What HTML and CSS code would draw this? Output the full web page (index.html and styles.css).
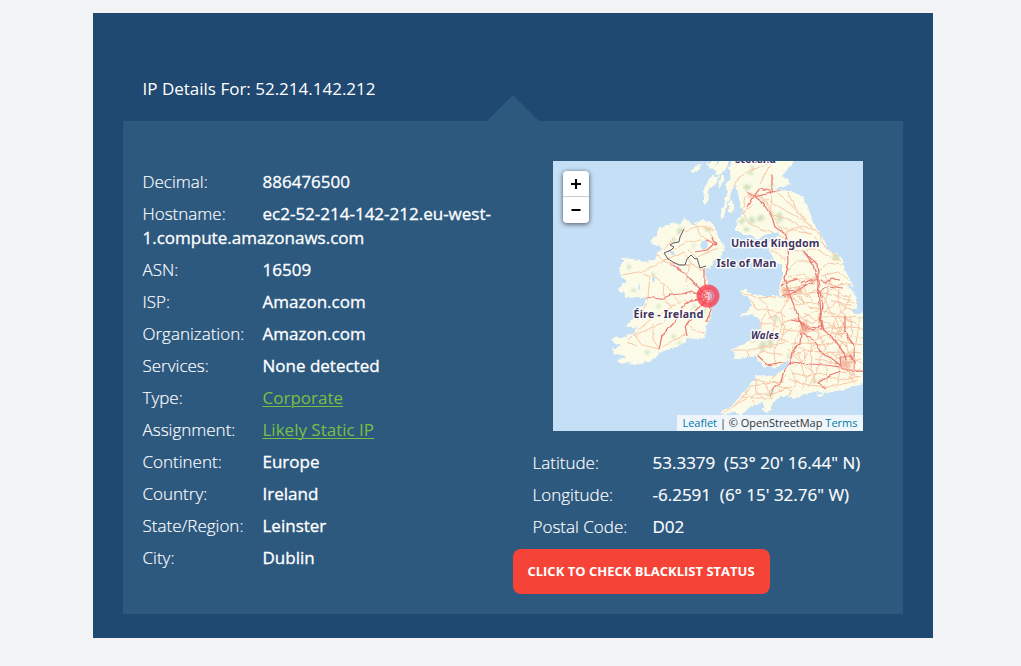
FILE: index.html
```
<!DOCTYPE html>
<html lang="en">
<head>
<meta charset="utf-8">
<title>IP Details</title>
<link rel="stylesheet" href="styles.css">
</head>
<body>
<main class="card">
  <h1 class="title">IP Details For: 52.214.142.212</h1>
  <section class="panel">
    <div class="details">
      <p class="row"><span class="label">Decimal:</span><span class="value">886476500</span></p>
      <p class="row"><span class="label">Hostname:</span><span class="value">ec2-52-214-142-212.eu-west-<br>1.compute.amazonaws.com</span></p>
      <p class="row"><span class="label">ASN:</span><span class="value">16509</span></p>
      <p class="row"><span class="label">ISP:</span><span class="value">Amazon.com</span></p>
      <p class="row"><span class="label">Organization:</span><span class="value">Amazon.com</span></p>
      <p class="row"><span class="label">Services:</span><span class="value">None detected</span></p>
      <p class="row"><span class="label">Type:</span><a class="link">Corporate</a></p>
      <p class="row"><span class="label">Assignment:</span><a class="link">Likely Static IP</a></p>
      <p class="row"><span class="label">Continent:</span><span class="value">Europe</span></p>
      <p class="row"><span class="label">Country:</span><span class="value">Ireland</span></p>
      <p class="row"><span class="label">State/Region:</span><span class="value">Leinster</span></p>
      <p class="row"><span class="label">City:</span><span class="value">Dublin</span></p>
    </div>
    <div class="location">
      <div class="map">
        <svg class="map-art" viewBox="553 161 310 270" width="310" height="270">
          <defs>
            <filter id="coast" x="-5%" y="-5%" width="110%" height="110%">
              <feTurbulence type="fractalNoise" baseFrequency="0.22" numOctaves="2" seed="4" result="n"/>
              <feDisplacementMap in="SourceGraphic" in2="n" scale="5" xChannelSelector="R" yChannelSelector="G"/>
            </filter>
            <filter id="wobble" x="-5%" y="-5%" width="110%" height="110%">
              <feTurbulence type="fractalNoise" baseFrequency="0.12" numOctaves="2" seed="9" result="n"/>
              <feDisplacementMap in="SourceGraphic" in2="n" scale="4" xChannelSelector="R" yChannelSelector="G"/>
              <feGaussianBlur stdDeviation="0.25"/>
            </filter>
            <filter id="soft"><feGaussianBlur stdDeviation="1"/></filter>
            <path id="gb" d="M733 160L728 168 731 176 726 184 727 194 724 204 720 213 721 219 724 217 726 207 729 199 732 191 736 184 738 193 740 203 743 212 736 222 736 230 741 234 751 235 758 239 765 235 775 232 781 235 773 238 768 245 770 253 776 262 783 267 783 275 780 283 780 293 782 298 775 296 760 296 751 293 743 290 742 295 750 299 751 305 746 312 740 317 753 314 760 320 759 329 755 338 743 344 731 349 736 356 733 360 745 358 755 355 759 361 763 366 775 368 786 362 791 360 786 368 778 373 773 376 756 375 755 379 748 388 740 396 735 404 721 413 725 415 735 411 741 416 745 411 755 404 763 403 763 409 768 413 773 403 780 396 788 396 795 398 808 393 818 391 825 393 838 391 855 386 868 383V310L860 313 855 315 852 310 857 307 857 300 852 290 846 285 853 286 850 280 847 273 842 265 843 258 838 255 828 250 823 240 819 230 813 223 808 207 803 197 793 192 781 190 775 192 780 187 790 185 788 180 783 177 785 172 793 163 794 158Z"/>
            <path id="eire" d="M684 217L689 221 694 227 695 222 705 221 714 223 716 232 720 240 724 247 722 255 716 259 713 263 708 269 705 272 706 278 708 285 710 297 712 308 711 318 706 327 704 334 705 338 695 339 688 338 685 342 677 347 668 350 660 353 655 358 647 362 637 365 628 364 633 360 622 364 618 361 625 356 613 353 612 348 622 345 612 342 613 338 622 337 633 334 638 328 626 326 633 318 638 310 646 302 646 298 635 297 625 297 624 293 618 290 621 285 627 282 621 277 619 272 622 265 622 258 633 259 645 262 655 260 657 253 663 249 660 245 652 245 650 241 658 233 657 230 667 225 673 222 680 225Z"/>
            <clipPath id="land"><use href="#gb"/><use href="#eire"/></clipPath>
          </defs>
          <rect class="sea" x="553" y="161" width="310" height="270"/>
          <g class="ground" filter="url(#coast)">
            <use href="#gb"/><use href="#eire"/>
            <path d="M728 203l4-2 3 6-2 6-5-1zM691 171l5-5 7-3-4 6-6 4zM708 180l6-5 5 2-3 8-7 3-3 8-3-2 2-9zM704 196l5-2-1 9-4 2zM713 168l9-8 8 0-4 9-8 7zM743 265l4-6 5-3-1 5-4 5zM741 290l6-1 1 6-6 0zM815 394l6-1 5 2-6 2zM707 165l5-5 6 1-5 8zM721 176l4-1-4 12-3 2z"/>
          </g>
          <g clip-path="url(#land)">
            <g class="wood" filter="url(#soft)">
              <path d="M745 184l7 2-4 5-5-3zM738 222l5-5 3 3-4 5zM748 219l4-3 4 5-5 4zM743 229l4-2 3 3-4 2zM776 214l5-2 2 8-5 3zM770 210l4 3-3 5zM756 218l6-4 3 5-6 3zM760 199l6 3-4 3zM746 174l5-3 3 4zM833 253l7 3-2 5-6-2zM768 330l6 6-2 14-6-10zM762 340l5 4-4 7-5-3zM774 314l4 5-4 5zM750 165l5 2-3 5zM768 186l5-2 2 4zM803 250l4 3-4 3zM843 357l5 2-4 3zM812 378l5 2-4 4zM770 390l5 2-4 5-4-2zM787 353l4 2-3 5zM677 229l5-2 1 4-5 3zM672 238l5 1-4 4zM705 227l6 0-2 5-5-2zM692 244l4 1-3 3zM627 264l5 3-4 3zM651 272l5 2-3 3zM630 291l4-3 3 4zM672 334l5 3-5 2zM645 350l6 2-5 3zM693 304l4 2-4 4zM676 344l4-3 2 3zM703 307l4 2-3 6zM657 304l4 1-3 5z"/>
            </g>
            <path class="lake" d="M702 241l5-1 1 7-5 3-3-4zM669 250l5 2 1 4-4-2zM653 275l2 3-1 5-2-3zM639 282l1 7-2 1zM665 313l1 6-2 3z"/>
            <g class="minor" filter="url(#wobble)">
              <!-- Ireland -->
              <path d="M622 275L643 271 660 262 684 252M643 273L650 277 648 296 646 304 638 321M649 272L664 284 680 302M685 232L701 226 714 230M668 252L687 242 701 240M696 223L700 236 715 243M684 252L692 265 704 270M634 334L650 320 671 307 686 300M633 335L642 345 659 349 686 333M653 323V340L659 348M633 336L650 328 664 322M633 335L628 342 637 346M692 309L686 324 705 335M670 307L663 295 664 284M690 264L686 282 691 297M650 260L659 255 665 262 690 266M688 250L697 257 707 252 719 248M706 225L714 239M663 251L672 240 684 227"/>
              <!-- Scotland and the north -->
              <path d="M734 191L738 178 751 170 762 166 773 161M772 161L760 184M757 195L773 203 790 213 813 227M761 194L773 215 789 219 810 235M779 193L789 203 799 214 814 229M746 196L743 213 751 225 765 230 783 238M742 213L753 205M772 195L769 209 780 228 794 231 812 234M788 192L794 206 806 220M784 233L802 226 816 230M786 238L780 250 772 248M786 250L800 251 816 249M816 229L824 246 837 256M814 237L830 250M817 249L830 258 841 261M786 260L770 249M788 270L797 261 817 261M818 271L828 263 841 265M821 276L838 272 847 279M818 280L835 285 852 284M788 277L804 274 813 282"/>
              <!-- England -->
              <path d="M782 282L799 279 815 279M783 290L797 287 815 283M779 284L790 297 800 303M784 298L797 294 819 292 839 297 857 303M776 292L792 286M800 280L806 292 813 302M797 296L809 307 821 309M788 300L781 311 783 322 779 337M788 310L803 303 820 304M784 321L800 319 818 310 833 313 852 322M822 293L828 306 836 320 843 337M829 285L826 300 818 317M839 289L838 305 846 318 858 326M851 293L846 308 835 320 829 339M804 313L816 320 827 316 863 318M783 330L797 331 816 331 831 327 863 329M807 318L797 337 791 355M821 316L817 332 826 349 832 366M833 323L844 340 838 351 843 362M850 316L853 332 846 345 852 362M860 319L856 343 849 360M791 345L806 343 822 345 838 341 862 345M791 357L805 350 820 353 840 352 863 354M806 334L812 349 810 366 816 383M820 333L808 354 795 367M829 342L820 358 817 372 808 387M788 349L801 363 807 379 801 391M793 373L806 376 821 373 839 380 861 376M789 379L802 384 817 386 836 386 858 380M826 366L827 383M840 371L836 388M848 371L856 385M843 382L863 367M786 376L778 386 791 391M791 369L796 382 789 395M802 367L798 352M818 338L837 333 862 338"/>
              <!-- Wales and the south west -->
              <path d="M743 293L758 298 776 297M751 299L757 310 769 309 785 316M759 298L769 309 761 321 761 335 750 344M768 309L775 325 770 342 760 352M760 322L778 326 791 320M760 336L780 338 791 344M733 350L748 350 766 347 787 342M757 354L765 351 783 355M775 366L774 351 780 338M778 373L766 385 771 398M755 379L766 383 784 382M723 413L740 402 757 394 773 394M733 407L743 397 752 386 766 384M741 397L758 398 773 398M756 379L757 393 766 400M773 394L791 387M774 384L782 392M747 350L748 358M745 392L756 403"/>
            </g>
            <g class="dense" filter="url(#wobble)">
              <path d="M783 286l7 8 9-4 8 6 8-6 8 6M782 293l10 6 9-3 2 9M784 302l12-8 5-9M798 327l8-7 7 4 7-8M798 315l9 5-1 11M836 355l11-3 8 7-2 11-12 2-6-8zM840 361l14 2M846 354l1 18M833 363l12 1 16-5M829 351l12 9 12-11M855 359l8 6M846 370l12 8M825 275l12 17 12 5M826 293l16-10M831 300l23 11M824 313l11-10 17 2M838 315l5 10-7 12 10 9M853 325l-13 10-12-4M823 321l14 7 15-2M795 343l10 9-1 13 10 9M815 359l17 4M811 352l14-12M783 335l9-8M813 383l17-8M775 315l10 12-4 13M768 319l12-6"/>
            </g>
            <g class="major" filter="url(#wobble)">
              <path d="M646 297L660 299 671 295 682 294 691 291 706 297M671 264L684 272 702 291 708 296M704 269L704 282 709 292M708 298L692 300 682 307 673 324 662 335 659 350M707 299L696 310 690 319 685 325 687 336M710 300L711 311 706 322M706 240L716 244 712 236M695 252L707 250 715 243"/>
              <path d="M754 196L762 202 771 215 775 227 785 234 787 249 788 262 784 278 789 293 795 308 799 319 804 331M772 175L772 192 754 196 746 192M754 196L760 188 773 192 781 190M753 196L747 207M805 253L817 264 818 275 818 286 819 302 820 314 822 329M803 250L813 265 817 278 820 293M781 285L791 281 798 279M783 291L800 290 815 280M782 297L791 294 800 288M815 279L825 283 832 279 841 280M819 291L829 286 842 288M801 284L813 279M799 319L806 326 822 329M804 327L814 330 823 324M802 333L813 340 820 351 834 360 842 367M823 329L834 340 844 353 846 360M801 332L800 344 792 353 790 362 784 370 781 382 774 386 770 396M757 355L768 365 782 362 792 362 809 364 825 365 840 367M841 371L830 375 818 383 826 388M863 371L852 371 841 367 840 357 850 356 855 362 855 370M844 316L844 330 854 347 854 358M791 320L801 322 806 329M820 291L822 301 821 316 824 331"/>
            </g>
            <g class="city" filter="url(#soft)"><path d="M802 324l6 0 3 5-5 5-6-3zM841 361l7-1 4 5-3 5-7 0-2-5zM782 288l8 1-1 8-6-1zM795 287l7 0 0 6-6 1zM748 193l6 1-1 4-5-1zM812 278l5-2 0 5-5 1z"/></g>
          </g>
          <path class="border" d="M684 229L682 233 680 237 679 242 673 243 670 245 674 247 671 250 664 253 668 259 673 262 679 265 685 265 687 259 691 255 695 259 697 258 700 268 706 266"/>
          <g class="places">
            <text x="735" y="163" textLength="41">Scotland</text>
            <text x="731" y="247" textLength="88.500">United Kingdom</text>
            <text x="716.500" y="267" textLength="60">Isle of Man</text>
            <text x="633.500" y="318" textLength="70">Éire - Ireland</text>
            <text class="region" x="751" y="339" textLength="28">Wales</text>
          </g>
          <circle class="pin" cx="708" cy="296" r="9"/>
          <circle class="pin-core" cx="708" cy="296" r="5"/>
        </svg>
        <div class="zoom">
          <span class="zoom-button"><svg width="12" height="12"><path d="M1 6H11M6 1V11"/></svg></span>
          <span class="zoom-button"><svg width="12" height="12"><path d="M1.500 6H10.500"/></svg></span>
        </div>
        <div class="credit"><a>Leaflet</a> | © OpenStreetMap <a>Terms</a></div>
      </div>
      <div class="coordinates">
        <p class="row"><span class="label">Latitude:</span><span class="value">53.3379&nbsp; (53° 20' 16.44" N)</span></p>
        <p class="row"><span class="label">Longitude:</span><span class="value">-6.2591&nbsp; (6° 15' 32.76" W)</span></p>
        <p class="row"><span class="label">Postal Code:</span><span class="value">D02</span></p>
      </div>
      <button class="check">CLICK TO CHECK BLACKLIST STATUS</button>
    </div>
  </section>
</main>
</body>
</html>
```
FILE: styles.css
```
* { box-sizing: border-box; }
body {
  margin: 0;
  padding-top: 13px;
  min-height: 666px;
  background: #f1f3f5;
  color: #fff;
  font: 400 17px/24px "Open Sans", sans-serif;
}
.card {
  width: 840px;
  height: 625px;
  margin-left: 93px;
  padding: 64px 30px 24px;
  background: #1f4971;
}
.title {
  margin: 0 0 20px 19.500px;
  font-size: 17px;
  font-weight: 400;
  line-height: 24px;
}
.panel {
  position: relative;
  display: grid;
  grid-template-columns: 390px 390px;
  height: 493px;
  background: #2d597f;
}
.panel::before {
  content: "";
  position: absolute;
  left: 363.500px;
  top: -26px;
  border: solid transparent;
  border-width: 0 26.500px 26px;
  border-bottom-color: #2d597f;
}
.details { padding: 49px 0 0 19.500px; }
.row { margin: 0 0 8px; }
.label {
  display: inline-block;
  width: 120px;
  font-weight: 300;
  -webkit-text-stroke: .15px #fff;
}
.value { font-weight: 500; -webkit-text-stroke: .3px #fff; }
.link { color: #76c043; text-decoration: underline; text-underline-offset: 2px; text-decoration-thickness: 1px; }
.location { padding-top: 40px; }
.map {
  position: relative;
  width: 310px;
  height: 270px;
  margin-left: 40px;
  overflow: hidden;
}
.map-art { display: block; }
.sea { fill: #c5dff6; }
.ground { fill: #fbfbe8; }
.lake { fill: #c5dff6; }
.wood { fill: #c9dcb5; opacity: .8; }
.minor, .dense, .major, .border { fill: none; stroke-linejoin: round; }
.minor { stroke: #f8c8a8; stroke-width: 1; }
.dense { stroke: #f6c0a0; stroke-width: .9; }
.major { stroke: #ec7872; stroke-width: 1.250; }
.city { fill: #f2a58c; opacity: .6; }
.border { stroke: #5c5a70; stroke-width: 1; }
.places {
  fill: #42325c;
  stroke: #fff;
  stroke-opacity: .85;
  stroke-width: 3px;
  stroke-linejoin: round;
  paint-order: stroke;
  font: 700 11px "Noto Sans", sans-serif;
}
.region { font-size: 10px; font-style: italic; }
.pin { fill: #f03; fill-opacity: .2; stroke: #f8384a; stroke-opacity: .75; stroke-width: 5px; }
.pin-core { fill: none; stroke: #f34c60; stroke-opacity: .6; stroke-width: 2px; }
.zoom {
  position: absolute;
  left: 10px;
  top: 10px;
  width: 26px;
  border-radius: 4px;
  background: #fff;
  box-shadow: 0 1px 5px rgba(0, 0, 0, .65);
}
.zoom-button {
  display: flex;
  align-items: center;
  justify-content: center;
  height: 26px;
}
.zoom-button:first-child { border-bottom: 1px solid #ccc; }
.zoom-button path { stroke: #000; stroke-width: 2; }
.credit {
  position: absolute;
  right: 0;
  bottom: 0;
  padding: 0 5.500px;
  background: rgba(255, 255, 255, .7);
  color: #333;
  font-size: 11px;
  line-height: 16px;
  white-space: nowrap;
}
.credit a { color: #0078a8; }
.coordinates { padding: 20px 0 0 19.500px; }
.coordinates .value { -webkit-text-stroke-width: .15px; }
.check {
  display: block;
  width: 257px;
  height: 45px;
  margin-top: 10px;
  padding: 0 1px 0 0;
  border: 0;
  border-radius: 8px;
  background: #f54437;
  color: #fff;
  font: 700 13px/45px "Open Sans", sans-serif;
}
```
